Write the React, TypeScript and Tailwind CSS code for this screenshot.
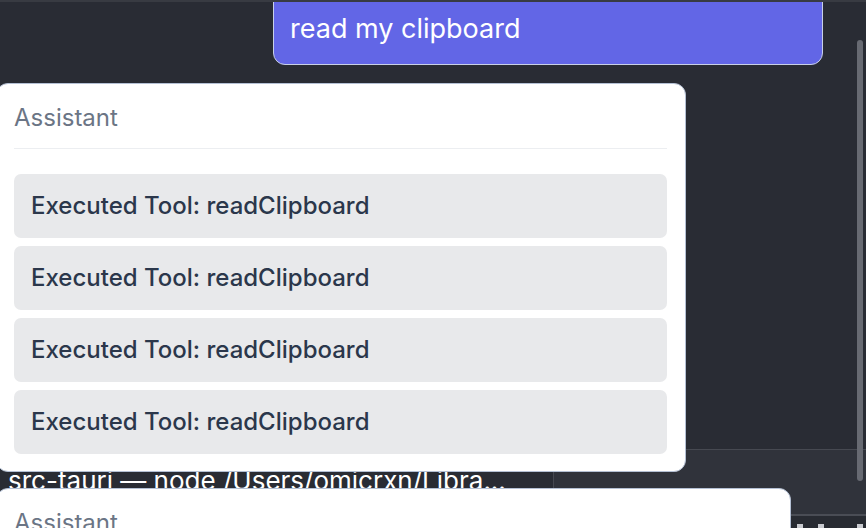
import React from 'react';

const tools = ['readClipboard', 'readClipboard', 'readClipboard', 'readClipboard'];

const ToolRow: React.FC<{ name: string }> = ({ name }) => (
  <div className="h-[64px] rounded-[7px] bg-[#e8e9eb] px-[17px] flex items-center">
    <span className="text-[24px] font-medium text-[#2b374b]">Executed Tool: {name}</span>
  </div>
);

export default function App() {
  return (
    <div
      className="relative w-[866px] h-[528px] overflow-hidden bg-[#292c34] border-t-2 border-[#383b42]"
      style={{ fontFamily: 'Inter, "Noto Sans", sans-serif' }}
    >
      {/* terminal window behind the chat */}
      <div className="absolute left-0 top-[464px] text-[26px] text-white whitespace-nowrap pl-[8px] leading-[30px]">
        src-tauri — node /Users/omicrxn/Libra...
      </div>
      <div className="absolute left-[553px] top-[447px] w-[313px] h-[66px] bg-[#30333b] border-t border-l border-[#464951]" />
      <div className="absolute left-[553px] top-[512px] w-[313px] h-[16px] bg-[#282b32] border-t-2 border-[#4a4d55]">
        <div className="flex gap-[15px] pl-[244px] pt-[8px]">
          <span className="w-[6px] h-[6px] bg-[#c9cbd0]" />
          <span className="w-[6px] h-[6px] bg-[#c9cbd0]" />
          <span className="w-[6px] h-[6px] bg-[#c9cbd0] ml-[18px]" />
        </div>
      </div>
      <div className="absolute right-[3px] top-[38px] w-[6px] h-[441px] rounded-full bg-[#676a72]" />

      {/* chat column */}
      <div className="relative flex flex-col -mt-[23px]">
        <div className="ml-[273px] w-[550px] h-[86px] rounded-[12px] bg-[#6266e6] border border-[#c8d0e6] px-[16px] flex items-end pb-[17px]">
          <span className="text-[27px] text-white leading-[36px]">read my clipboard</span>
        </div>

        <div className="mt-[18px] -ml-[4px] w-[690px] rounded-[12px] bg-white border border-[#b4c0d4] pl-[17px] pr-[18px] pb-[17px]">
          <div className="h-[65px] pt-[3px] flex items-center border-b border-[#eceef1]">
            <span className="text-[24px] text-[#6b7585]">Assistant</span>
          </div>
          <div className="flex flex-col gap-[8px] mt-[25px]">
            {tools.map((t, i) => (
              <ToolRow key={i} name={t} />
            ))}
          </div>
        </div>

        <div className="mt-[16px] -ml-[4px] w-[795px] h-[120px] rounded-[12px] bg-white border border-[#b4c0d4] pl-[17px]">
          <div className="h-[65px] pt-[3px] flex items-center">
            <span className="text-[24px] text-[#6b7585]">Assistant</span>
          </div>
        </div>
      </div>
    </div>
  );
}
